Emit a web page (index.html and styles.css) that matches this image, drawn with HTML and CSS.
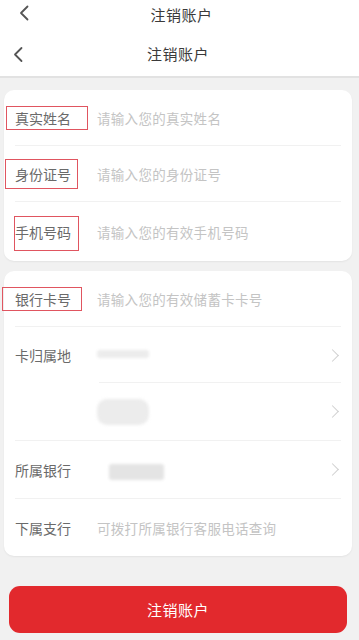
FILE: index.html
```html
<!DOCTYPE html>
<html lang="zh">
<head>
<meta charset="utf-8">
<link rel="stylesheet" href="styles.css">
</head>
<body>
<div class="bar bar-top">
  <svg class="back back-1" viewBox="0 0 10 16" width="10" height="16"><path d="M8.5 1.5 L2 8 L8.5 14.5" fill="none" stroke="#555" stroke-width="1.8" stroke-linecap="round" stroke-linejoin="round"/></svg>
  <span class="title">注销账户</span>
</div>
<div class="bar bar-main">
  <svg class="back back-2" viewBox="0 0 10 16" width="10" height="17"><path d="M8.5 1.5 L2 8 L8.5 14.5" fill="none" stroke="#555" stroke-width="1.8" stroke-linecap="round" stroke-linejoin="round"/></svg>
  <span class="title">注销账户</span>
</div>
<main class="content">
  <section class="card card-1">
    <div class="row"><span class="label">真实姓名</span><span class="ph">请输入您的真实姓名</span></div>
    <div class="row"><span class="label">身份证号</span><span class="ph">请输入您的身份证号</span></div>
    <div class="row row-last"><span class="label">手机号码</span><span class="ph">请输入您的有效手机号码</span></div>
    <span class="mark m1"></span>
    <span class="mark m2"></span>
    <span class="mark m3"></span>
  </section>
  <section class="card card-2">
    <div class="row"><span class="label">银行卡号</span><span class="ph">请输入您的有效储蓄卡卡号</span></div>
    <div class="row row-inset"><span class="label">卡归属地</span><span class="blur b1"></span><span class="chev"></span></div>
    <div class="row row-tall"><span class="label"></span><span class="blur b2"></span><span class="chev"></span></div>
    <div class="row row-tall"><span class="label">所属银行</span><span class="blur b3"></span><span class="chev"></span></div>
    <div class="row row-last"><span class="label">下属支行</span><span class="ph">可拨打所属银行客服电话查询</span></div>
    <span class="mark m4"></span>
  </section>
  <button class="btn">注销账户</button>
</main>
</body>
</html>
```
FILE: styles.css
```css
* { box-sizing: border-box; }
body {
  margin: 0;
  background: #f1f1f1;
  font-family: "Noto Sans CJK SC", "Noto Sans", sans-serif;
  width: 359px;
  height: 640px;
  overflow: hidden;
}
.bar {
  background: #fff;
  display: flex;
  align-items: center;
  justify-content: center;
  position: relative;
}
.bar-top { height: 28px; }
.bar-main { height: 50px; border-bottom: 2px solid #e2e2e2; padding-top: 2px; }
.title { font-size: 15px; color: #3a3a3a; letter-spacing: 0.5px; }
.bar-top .title { margin-left: 4px; }
.bar-main .title { margin-left: -3px; }
.back { position: absolute; }
.back-1 { left: 19px; top: 5px; }
.back-2 { left: 13px; top: 18px; }
.content { padding: 12px 7px 0 4px; }
.card {
  background: #fff;
  border-radius: 10px;
  position: relative;
  padding: 0 11px 0 11px;
  box-shadow: 0 1px 2px rgba(0,0,0,0.06);
}
.card-2 { margin-top: 10px; }
.row {
  height: 56px;
  display: flex;
  align-items: center;
  border-bottom: 1px solid #f1f1f1;
  position: relative;
}
.row-tall { height: 58px; }
.row-last { border-bottom: none; height: 59px; }
.card-2 .row-last { height: 57px; }
.row-inset { border-bottom: none; }
.row-inset::after {
  content: "";
  position: absolute;
  left: 84px; right: 0; bottom: 0;
  height: 1px; background: #f1f1f1;
}
.label {
  width: 82px;
  flex: none;
  font-size: 14px;
  color: #6a6a6a;
  padding-left: 0;
}
.ph { font-size: 13.5px; color: #c4c4c4; letter-spacing: 0.3px; }
.chev {
  margin-left: auto;
  margin-right: 4px;
  width: 9px; height: 9px;
  border-top: 1.5px solid #d0d0d0;
  border-right: 1.5px solid #d0d0d0;
  transform: rotate(45deg);
}
.blur { display: block; background: #ececec; border-radius: 3px; filter: blur(1.5px); }
.b1 { width: 52px; height: 8px; margin-top: -2px; }
.b2 { width: 52px; height: 26px; border-radius: 10px; }
.b3 { width: 55px; height: 16px; margin-left: 12px; margin-top: 4px; background: #e4e4e4; }
.mark {
  position: absolute;
  border: 1.5px solid #e05560;
}
.m1 { left: 2px; top: 16px; width: 82px; height: 24px; }
.m2 { left: 1px; top: 69px; width: 73px; height: 30px; }
.m3 { left: 10px; top: 126px; width: 65px; height: 35px; }
.m4 { left: -2px; top: 16px; width: 80px; height: 24px; }
.btn {
  display: flex;
  align-items: center;
  justify-content: center;
  margin: 30px 0 0 5px;
  width: 338px;
  height: 47px;
  border: none;
  border-radius: 11px;
  background: #e2292d;
  color: #fff;
  font-family: "Noto Sans CJK SC", "Noto Sans", sans-serif;
  font-size: 15px;
  letter-spacing: 0.5px;
}
```
